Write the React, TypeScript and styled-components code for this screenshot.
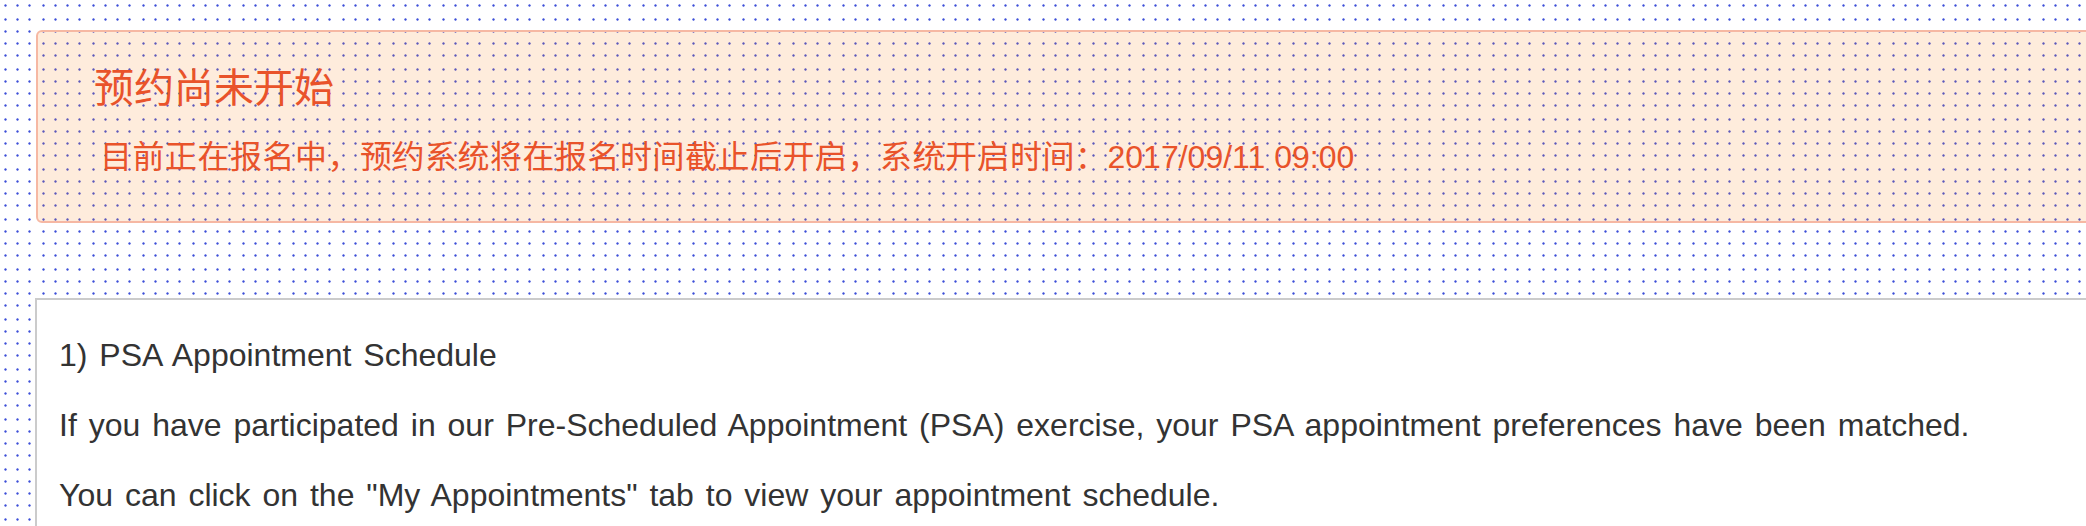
import React from "react";
import styled, { createGlobalStyle } from "styled-components";

// The dot grid repeats every 50px with four dots per axis at uneven offsets.
const DOT_X = [5.5, 17.5, 29.5, 43.5];
const DOT_Y = [5.5, 19.5, 31.5, 43.5];
const dotLayers = DOT_Y.flatMap((y) =>
  DOT_X.map(
    (x) =>
      `radial-gradient(circle at ${x}px ${y}px, #3d4fd8 0, #3d4fd8 0.8px, rgba(61, 79, 216, 0.25) 1.3px, transparent 1.8px)`
  )
).join(",\n    ");

const GlobalStyle = createGlobalStyle`
  html, body {
    margin: 0;
    padding: 0;
    overflow: hidden;
  }
  body {
    background-color: #ffffff;
    background-image: ${dotLayers};
    background-size: 50px 50px;
    background-repeat: repeat;
    font-family: "Liberation Sans", "Noto Sans CJK SC", Arial, sans-serif;
  }
`;

const Page = styled.div`
  display: flex;
  flex-direction: column;
  padding: 30px 0 0 35px;
  min-height: 526px;
  box-sizing: border-box;
`;

const Alert = styled.section`
  margin: 0 -24px 0 1px;
  padding: 32px 0 44px 56px;
  border: 2px solid #f6b8a3;
  border-radius: 6px;
  background: rgba(248, 140, 50, 0.17);
  color: #e9532a;
  font-family: "Liberation Sans", "Noto Sans CJK SC", sans-serif;
`;

const AlertTitle = styled.h2`
  margin: 0;
  font-size: 40px;
  line-height: 48px;
  font-weight: 400;
`;

const AlertText = styled.p`
  margin: 25px 0 0 6px;
  font-size: 32px;
  line-height: 40px;
`;

const Cjk = styled.span`
  letter-spacing: 0.5px;
`;

const Panel = styled.section`
  margin: 75px -24px 0 0;
  padding: 32px 0 40px 22px;
  border: 2px solid #cbcbcb;
  border-right: none;
  background: #ffffff;
  color: #333333;
`;

const Para = styled.p`
  margin: 0 0 24px;
  font-size: 32px;
  line-height: 46px;
  word-spacing: 3px;
  white-space: nowrap;
`;

export default function App() {
  return (
    <>
      <GlobalStyle />
      <Page>
        <Alert>
          <AlertTitle>预约尚未开始</AlertTitle>
          <AlertText>
            <Cjk>目前正在报名中，预约系统将在报名时间截止后开启，系统开启时间：</Cjk>2017/09/11 09:00
          </AlertText>
        </Alert>
        <Panel>
          <Para>1) PSA Appointment Schedule</Para>
          <Para>
            If you have participated in our Pre-Scheduled Appointment (PSA) exercise, your PSA
            appointment preferences have been matched.
          </Para>
          <Para>You can click on the "My Appointments" tab to view your appointment schedule.</Para>
        </Panel>
      </Page>
    </>
  );
}
